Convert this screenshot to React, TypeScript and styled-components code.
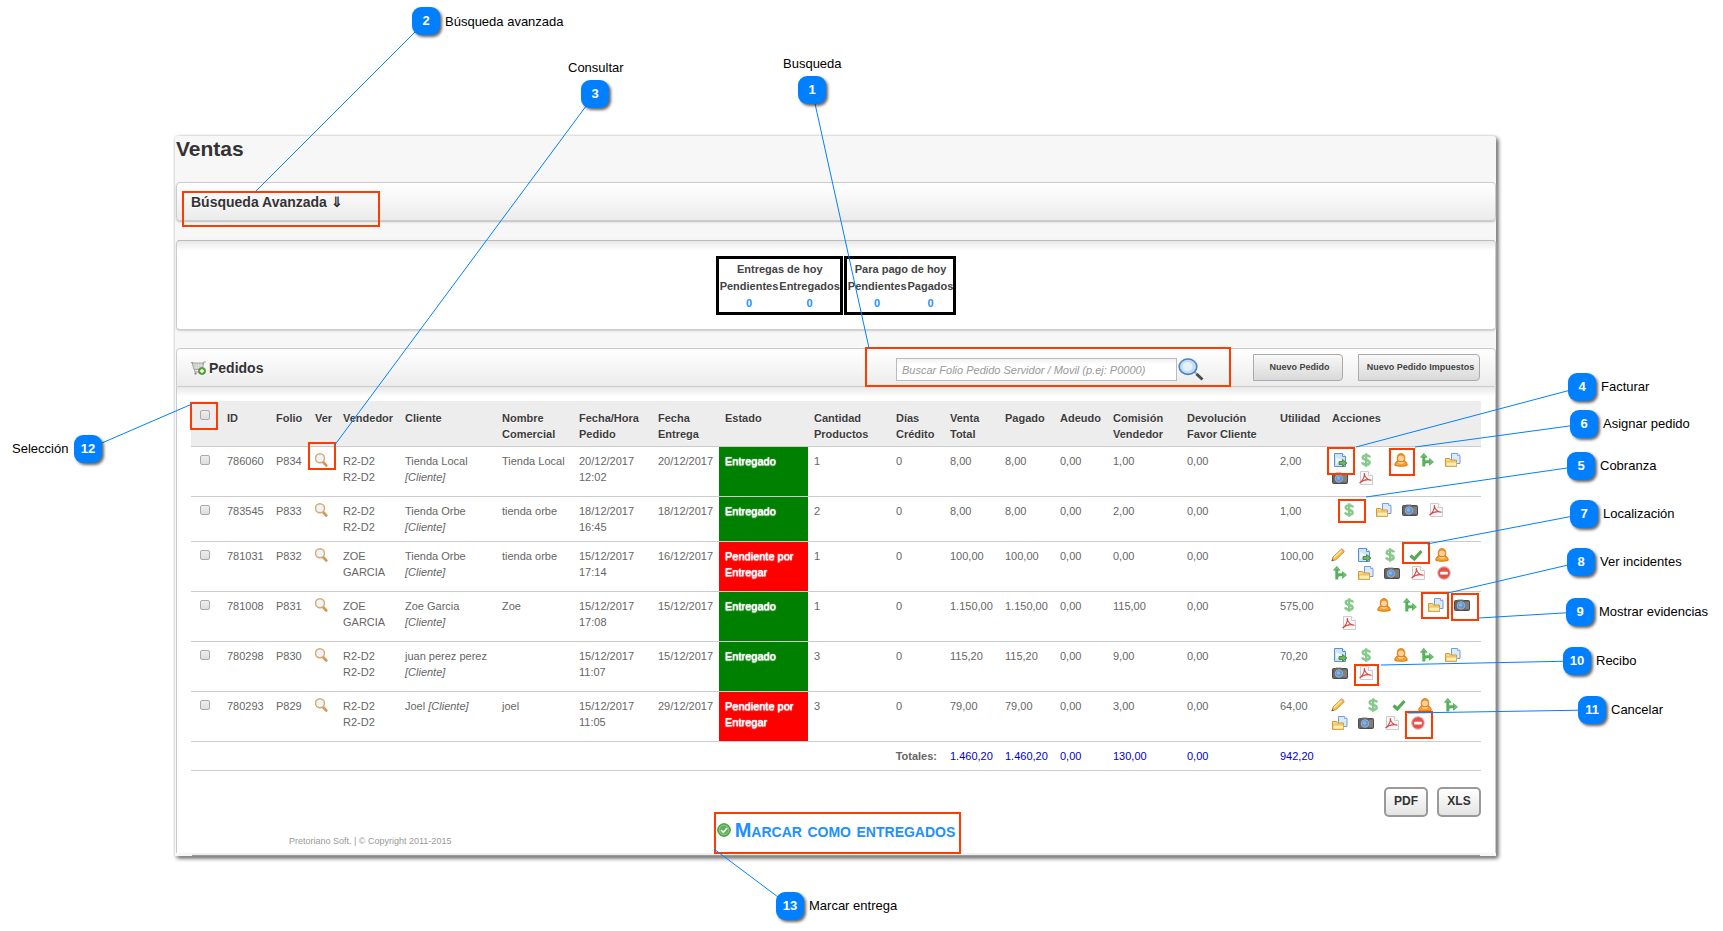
import React from "react";
import styled, { createGlobalStyle } from "styled-components";

const GlobalStyle = createGlobalStyle`
  *, *::before, *::after { box-sizing: border-box; }
  body {
    margin: 0;
    background: #fff;
    font-family: "Liberation Sans", Arial, sans-serif;
    font-size: 11px;
    line-height: 16px;
    color: #666;
  }
`;

const Page = styled.div`
  position: relative;
  padding: 136px 227px 68px 175px;
`;

const Sheet = styled.main`
  padding-left: 1px;
  background: #f7f7f7;
  border-radius: 3px 3px 0 0;
  box-shadow: 0 0 2px #ccc, 2px 2px 4px #444;
`;

const Title = styled.h1`
  margin: 0 0 21px;
  font-size: 21px;
  line-height: 25px;
  color: #333;
`;

const Bar = styled.div`
  display: flex;
  align-items: center;
  height: 39px;
  padding: 0 14px;
  border: 1px solid #ccc;
  border-radius: 4px 4px 0 0;
  background: linear-gradient(#fff, #ececec);
`;

const SearchBar = styled(Bar)`
  margin-bottom: 19px;
  border-radius: 4px;
  box-shadow: 0 1px 2px #bbb;
`;

const BarTitle = styled.h2`
  display: flex;
  align-items: center;
  gap: 3px;
  flex: 1;
  margin: 0;
  font-size: 14px;
  line-height: 18px;
  color: #333;
  text-shadow: 0 1px 0 #fff;
`;

const Summary = styled.section`
  display: flex;
  justify-content: center;
  gap: 1px;
  height: 90px;
  margin-bottom: 18px;
  padding-top: 15px;
  border: 1px solid #ccc;
  border-top-color: #bbb;
  border-radius: 4px;
  background: linear-gradient(#e8e8e8, #fff 10px);
  box-shadow: 0 1px 2px #ccc;
`;

const SummaryTable = styled.table`
  height: 59px;
  padding-top: 2px;
  border: 3px solid #000;
  border-spacing: 0;
  color: #444;
  text-align: center;

  th, td {
    padding: 0 0 0 1px;
    line-height: 17px;
    font-weight: bold;
  }

  td { color: #1e90ff; }
`;

const Content = styled.section`
  padding: 14px 14px 6px;
  border: solid #ccc;
  border-width: 0 1px;
  background: linear-gradient(#e8e8e8, #fff 10px);
`;

const SheetEdge = styled.div`
  height: 3px;
  margin: 0 16px;
  border-bottom: 1px solid #999;
  background: #f0f0f0;
`;

const SearchForm = styled.form`
  display: flex;
  align-items: center;
  gap: 1px;
  margin: 4px 49px 0 0;
`;

const SearchInput = styled.input`
  width: 281px;
  height: 23px;
  padding: 0 5px;
  border: 1px solid #bbb;
  background: linear-gradient(#f2f2f2, #fff 6px);
  font: 11px "Liberation Sans", Arial, sans-serif;

  &::placeholder {
    color: #999;
    font-style: italic;
    opacity: 1;
  }
`;

const IconButton = styled.button`
  display: block;
  padding: 0;
  border: 0;
  background: none;
  cursor: pointer;

  svg { display: block; }
`;

const BarButton = styled.button<{ $width: number }>`
  width: ${(p) => p.$width}px;
  height: 27px;
  margin-right: 1px;
  padding: 0 0 2px 3px;
  border: 1px solid #aaa;
  border-radius: 0 4px 4px 0;
  background: linear-gradient(#f8f8f8, #d9d9d9);
  font: bold 9px "Liberation Sans", Arial, sans-serif;
  white-space: nowrap;
  color: #444;

  & + & { margin-left: 14px; }
`;

const OrdersTable = styled.table`
  width: 100%;
  table-layout: fixed;
  border-spacing: 0;

  th, td {
    padding: 6px 5px 6px 6px;
    border-bottom: 1px solid #ccc;
    text-align: left;
    vertical-align: top;
  }

  th {
    padding: 9px 0 4px 6px;
    background: #ededed;
    color: #3c3c3c;
    text-shadow: 0 1px 0 #fff;
  }

  th:first-child { padding-top: 7px; }
`;

const Check = styled.input`
  appearance: none;
  display: block;
  width: 10px;
  height: 10px;
  margin: 2px 0 0 3px;
  border: 1px solid #aaa;
  border-radius: 2px;
  background: linear-gradient(#eee, #ddd);
`;

const StatusCell = styled.td<{ $done: boolean }>`
  background: ${(p) => (p.$done ? "#008000" : "#ff0000")};
  color: #fff;
  text-shadow: 0 1px 1px #fff, 0 0 1px #fff;
`;

const TotalLabel = styled.td`
  && {
    padding-right: 7px;
    text-align: right;
    font-weight: bold;
  }
`;

const Total = styled.td`
  color: #0000cc;
`;

const Actions = styled.div`
  display: flex;
  flex-direction: column;
  gap: 4px;
  margin-bottom: 5px;
`;

const ActionLine = styled.div`
  display: flex;
  gap: 10px;
  height: 14px;
`;

const ActionSpace = styled.span`
  width: 9px;
  margin-right: -10px;
`;

const Exports = styled.div`
  display: flex;
  justify-content: flex-end;
  gap: 9px;
  margin-top: 16px;
`;

const ExportButton = styled.button`
  min-width: 44px;
  height: 30px;
  padding: 0 8px 2px;
  border: 2px solid #999;
  border-radius: 5px;
  background: linear-gradient(#fff, #e4e4e4);
  font: bold 12px "Liberation Sans", Arial, sans-serif;
  color: #333;
`;

const Footer = styled.footer`
  display: grid;
  grid-template-columns: 1fr auto 1fr;
  height: 30px;
`;

const Copyright = styled.small`
  align-self: end;
  padding-left: 98px;
  font-size: 9px;
  line-height: 12px;
  color: #999;
`;

const MarkLink = styled.a`
  display: flex;
  gap: 4px;
  font-size: 20px;
  font-weight: bold;
  font-variant: small-caps;
  line-height: 27px;
  color: #1e90ff;
  text-decoration: none;

  svg { margin-top: 6px; }
`;

const Overlay = styled.div`
  position: absolute;
  inset: 0;
  pointer-events: none;
`;

const Leaders = styled.svg`
  position: absolute;
  inset: 0;
  width: 100%;
  height: 100%;
  overflow: visible;
  stroke: #0080ff;
`;

const Frame = styled.div<{ $x: number; $y: number; $w: number; $h: number }>`
  position: absolute;
  left: ${(p) => p.$x}px;
  top: ${(p) => p.$y}px;
  width: ${(p) => p.$w}px;
  height: ${(p) => p.$h}px;
  border: 2px solid #ff3b00;
`;

const Badge = styled.span<{ $x: number; $y: number }>`
  position: absolute;
  left: ${(p) => p.$x}px;
  top: ${(p) => p.$y}px;
  width: 28px;
  height: 28px;
  border-radius: 9px;
  background: #0080ff;
  box-shadow: 2px 2px 3px rgba(0, 0, 0, 0.6);
  color: #fff;
  font-size: 13px;
  font-weight: bold;
  line-height: 28px;
  text-align: center;
`;

const Label = styled.span<{ $x: number; $y: number }>`
  position: absolute;
  left: ${(p) => p.$x}px;
  top: ${(p) => p.$y}px;
  padding-left: 1px;
  font-size: 13px;
  line-height: 16px;
  white-space: nowrap;
  color: #000;
`;

type IconName =
  | "invoice" | "dollar" | "user" | "branch" | "folder"
  | "camera" | "pdf" | "pencil" | "tick" | "cancel";

const drawings: Record<IconName, React.ReactNode> = {
  invoice: (
    <>
      <path d="M2.500.5h8l3 3v10h-11z" fill="#cfe3f8" stroke="#5b93d0" />
      <path d="M10.500.5v3h3" fill="#fff" stroke="#5b93d0" />
      <path d="M4 11V4l6 3z" fill="#eef6ff" />
      <path d="M7 8.500h3.500v-2l4.500 3.500-4.500 3.500v-2H7z" fill="#6cb85a" stroke="#3b7f32" strokeWidth=".8" />
    </>
  ),
  dollar: (
    <path
      d="M12 4.300C11.500 2.800 10 2.400 8.200 2.400 6 2.400 4.700 3.300 4.700 4.600c0 3.200 7 1.500 7 4.800 0 1.400-1.500 2.200-3.500 2.200-2.200 0-3.700-.700-4.200-2.300M8.200.2v13.600"
      fill="none" stroke="#86c98b" strokeWidth="2.400"
    />
  ),
  user: (
    <>
      <path d="M1.800 12.300c0-2.600 1.500-4 3.700-4.300h5c2.200.3 3.700 1.700 3.700 4.300-2 1.200-10.400 1.200-12.400 0z" fill="#f9a12c" stroke="#d07208" />
      <path d="M4.300 7.500C3.500 3 5 .5 8 .5s4.500 2.500 3.700 7c-1.500 1.500-5.900 1.500-7.400 0z" fill="#ee8c1c" stroke="#d07208" strokeWidth=".6" />
      <ellipse cx="8" cy="5.300" rx="2.900" ry="2.900" fill="#fcd3a0" />
      <path d="M5.300 9c1.500 1.500 3.900 1.500 5.400 0" fill="none" stroke="#fbd8a5" strokeWidth="1.200" />
    </>
  ),
  branch: (
    <>
      <path d="M4.800 3v10.500M4.800 11.500c0-2 1-2.700 3-2.700h3" fill="none" stroke="#55b25b" strokeWidth="3" />
      <path d="M1.500 4.300L4.800.3l3.300 4zM10.500 5.500l4 3.400-4 3.400z" fill="#6cc071" stroke="#3f9d48" strokeWidth=".6" />
    </>
  ),
  folder: (
    <>
      <path d="M6.500.5h6l2.500 2v8H6.500z" fill="#dbe9fb" stroke="#6f9fdc" />
      <path d="M12.500.5v2H15" fill="#fff" stroke="#6f9fdc" strokeWidth=".8" />
      <path d="M.500 13.500v-8h4l1 1.500h6v6.500z" fill="#fbd777" stroke="#cf9a38" />
      <path d="M1 13.200V9h10.500v4.200z" fill="#fdeeb5" stroke="#d9a646" strokeWidth=".7" />
    </>
  ),
  camera: (
    <>
      <rect x=".5" y="2.500" width="15" height="10" rx="1" fill="#666" stroke="#4c4c4c" />
      <path d="M3 2.500l1-1h5l1 1z" fill="#888" />
      <path d="M12 4v7M14 4v7" stroke="#999" />
      <circle cx="7" cy="7.500" r="3.800" fill="#5e98d8" stroke="#a8adb5" />
      <circle cx="6.500" cy="7" r="1.700" fill="#84b6ee" />
    </>
  ),
  pdf: (
    <>
      <path d="M2.500.5h8l4 4v9h-12z" fill="#f8f8f8" stroke="#ccc" />
      <path d="M10.500.5v4h4" fill="#fff" stroke="#ccc" />
      <path d="M1.500 12C4 10.500 7 6 6.300 2.200 6.500 6 9.500 9 13.500 9.200 9.500 8 5 9 1.500 12z" fill="none" stroke="#dc4446" strokeWidth="1.100" />
    </>
  ),
  pencil: (
    <>
      <path d="M2 12.800l1-3.800 8.500-8 2.800 2.600-8.500 8.200z" fill="#f7c04d" stroke="#c98a24" strokeWidth=".9" />
      <path d="M4 9.500l8-7.300" stroke="#ffe9a0" strokeWidth="1.200" />
      <path d="M10.800 1.600l1-1c1 0 2.600 1.500 2.500 2.600l-1 1z" fill="#e8a080" />
      <path d="M1.500 13.300l.7-2.300 1.600 1.600z" fill="#555" />
    </>
  ),
  tick: <path d="M2.500 7.500l3.800 3.500L13.500 3" fill="none" stroke="#55a957" strokeWidth="3.200" />,
  cancel: (
    <>
      <circle cx="8" cy="7" r="6.200" fill="#e4514b" stroke="#eba19c" />
      <rect x="4.200" y="5.700" width="7.600" height="2.800" rx=".5" fill="#fff" />
    </>
  ),
};

const ActionIcon = ({ name }: { name: IconName }) => {
  const width = name === "pencil" ? 14 : 16;
  return (
    <svg width={width} height="14" viewBox={`${16 - width} 0 ${width} 14`} overflow="visible">
      {drawings[name]}
    </svg>
  );
};

const ViewIcon = () => (
  <svg width="14" height="14" viewBox="1 0 14 14">
    <path d="M9 9l3.300 3.500" stroke="#cf9a5a" strokeWidth="2.600" strokeLinecap="round" />
    <circle cx="6" cy="5.300" r="4.500" fill="#eaf4fd" stroke="#dda766" strokeWidth="1.400" />
  </svg>
);

const SearchIcon = () => (
  <svg width="26" height="23" viewBox="0 0 26 23">
    <path d="M16.500 14l3 2.500" stroke="#aaa" strokeWidth="2" />
    <path d="M18.500 16l6 5.500" stroke="#4a4a4a" strokeWidth="3" />
    <ellipse cx="10" cy="8.700" rx="8.800" ry="7.700" fill="#c6dcf0" stroke="#4785c0" strokeWidth="1.600" />
    <ellipse cx="9.500" cy="8.500" rx="5" ry="4.500" fill="#e6f0f9" />
  </svg>
);

const CartIcon = () => (
  <svg width="15" height="14" viewBox="0 0 15 14">
    <path d="M0 1.500h2l2 9.500h7" fill="none" stroke="#999" />
    <path d="M1 2h11.500l-1 6.500H3z" fill="#c4c4c4" stroke="#999" strokeWidth=".8" />
    <path d="M14.800 1h-2l-1 3" fill="none" stroke="#999" />
    <path d="M2 4h10M2.500 6.200h9M5 2.500V8M7.500 2.500V8M10 2.500V8" stroke="#f0f0f0" strokeWidth=".6" />
    <circle cx="4.500" cy="12.500" r="1.200" fill="#999" />
    <circle cx="11" cy="10" r="3.600" fill="#5aa832" stroke="#3e7f20" strokeWidth=".6" />
    <path d="M11 8v4M9 10h4" stroke="#fff" strokeWidth="1.300" />
  </svg>
);

const DoneIcon = () => (
  <svg width="14" height="14" viewBox="0 0 14 14">
    <circle cx="7" cy="7" r="6.300" fill="#5db254" stroke="#3f8f3a" />
    <circle cx="7" cy="7" r="4.800" fill="none" stroke="#9ad694" strokeWidth=".8" />
    <path d="M4 7l2.300 2.300L10.200 5" fill="none" stroke="#fff" strokeWidth="1.600" />
  </svg>
);

const columns: [string, number][] = [
  ["", 30], ["ID", 49], ["Folio", 39], ["Ver", 28], ["Vendedor", 62], ["Cliente", 97],
  ["Nombre Comercial", 77], ["Fecha/Hora Pedido", 79], ["Fecha\nEntrega", 67], ["Estado", 89],
  ["Cantidad Productos", 82], ["Días Crédito", 54], ["Venta\nTotal", 55], ["Pagado", 55],
  ["Adeudo", 53], ["Comisión Vendedor", 74], ["Devolución Favor Cliente", 93],
  ["Utilidad", 52], ["Acciones", 155],
];

const HeadText = styled.span`
  white-space: pre-line;
`;

type Action = IconName | "space";

interface Order {
  id: string;
  folio: string;
  seller: string;
  client: string;
  business: string;
  ordered: string;
  delivery: string;
  done: boolean;
  quantity: number;
  amounts: string[];
  actions: Action[][];
}

const orders: Order[] = [
  {
    id: "786060", folio: "P834", seller: "R2-D2 R2-D2", client: "Tienda Local", business: "Tienda Local",
    ordered: "20/12/2017 12:02", delivery: "20/12/2017", done: true, quantity: 1,
    amounts: ["8,00", "8,00", "0,00", "1,00", "0,00", "2,00"],
    actions: [["invoice", "dollar", "space", "user", "branch", "folder"], ["camera", "pdf"]],
  },
  {
    id: "783545", folio: "P833", seller: "R2-D2 R2-D2", client: "Tienda Orbe", business: "tienda orbe",
    ordered: "18/12/2017 16:45", delivery: "18/12/2017", done: true, quantity: 2,
    amounts: ["8,00", "8,00", "0,00", "2,00", "0,00", "1,00"],
    actions: [["space", "dollar", "space", "folder", "camera", "pdf"]],
  },
  {
    id: "781031", folio: "P832", seller: "ZOE GARCIA", client: "Tienda Orbe", business: "tienda orbe",
    ordered: "15/12/2017 17:14", delivery: "16/12/2017", done: false, quantity: 1,
    amounts: ["100,00", "100,00", "0,00", "0,00", "0,00", "100,00"],
    actions: [["pencil", "invoice", "dollar", "tick", "user"], ["branch", "folder", "camera", "pdf", "cancel"]],
  },
  {
    id: "781008", folio: "P831", seller: "ZOE GARCIA", client: "Zoe Garcia", business: "Zoe",
    ordered: "15/12/2017 17:08", delivery: "15/12/2017", done: true, quantity: 1,
    amounts: ["1.150,00", "1.150,00", "0,00", "115,00", "0,00", "575,00"],
    actions: [["space", "dollar", "space", "user", "branch", "folder", "camera"], ["space", "pdf"]],
  },
  {
    id: "780298", folio: "P830", seller: "R2-D2 R2-D2", client: "juan perez perez", business: "",
    ordered: "15/12/2017 11:07", delivery: "15/12/2017", done: true, quantity: 3,
    amounts: ["115,20", "115,20", "0,00", "9,00", "0,00", "70,20"],
    actions: [["invoice", "dollar", "space", "user", "branch", "folder"], ["camera", "pdf"]],
  },
  {
    id: "780293", folio: "P829", seller: "R2-D2 R2-D2", client: "Joel", business: "joel",
    ordered: "15/12/2017 11:05", delivery: "29/12/2017", done: false, quantity: 3,
    amounts: ["79,00", "79,00", "0,00", "3,00", "0,00", "64,00"],
    actions: [["pencil", "space", "dollar", "tick", "user", "branch"], ["folder", "camera", "pdf", "cancel"]],
  },
];

const totals = ["1.460,20", "1.460,20", "0,00", "130,00", "0,00", "942,20"];

const actionNames: Record<IconName, string> = {
  invoice: "Facturar", dollar: "Cobranza", user: "Asignar pedido", branch: "Ruta",
  folder: "Ver incidentes", camera: "Mostrar evidencias", pdf: "Recibo",
  pencil: "Editar", tick: "Localización", cancel: "Cancelar",
};

interface Callout {
  n: number;
  text: string;
  badge: [number, number];
  label: [number, number];
  tip: [number, number];
  frame: [number, number, number, number];
}

const callouts: Callout[] = [
  { n: 1, text: "Busqueda", badge: [798, 76], label: [782, 56], tip: [869, 348], frame: [865, 347, 366, 40] },
  { n: 2, text: "Búsqueda avanzada", badge: [412, 7], label: [444, 14], tip: [256, 191], frame: [182, 191, 198, 36] },
  { n: 3, text: "Consultar", badge: [581, 80], label: [567, 60], tip: [334, 446], frame: [308, 442, 28, 28] },
  { n: 4, text: "Facturar", badge: [1568, 373], label: [1600, 379], tip: [1356, 447], frame: [1327, 447, 28, 28] },
  { n: 6, text: "Asignar pedido", badge: [1570, 410], label: [1602, 416], tip: [1415, 447], frame: [1389, 448, 26, 28] },
  { n: 5, text: "Cobranza", badge: [1567, 452], label: [1599, 458], tip: [1366, 497], frame: [1338, 499, 28, 24] },
  { n: 7, text: "Localización", badge: [1570, 500], label: [1602, 506], tip: [1427, 544], frame: [1402, 542, 28, 22] },
  { n: 8, text: "Ver incidentes", badge: [1567, 548], label: [1599, 554], tip: [1448, 593], frame: [1421, 592, 28, 27] },
  { n: 9, text: "Mostrar evidencias", badge: [1566, 598], label: [1598, 604], tip: [1479, 618], frame: [1451, 593, 28, 28] },
  { n: 10, text: "Recibo", badge: [1563, 647], label: [1595, 653], tip: [1381, 665], frame: [1354, 664, 25, 22] },
  { n: 11, text: "Cancelar", badge: [1578, 696], label: [1610, 702], tip: [1408, 713], frame: [1405, 711, 28, 28] },
  { n: 12, text: "Selección", badge: [74, 435], label: [11, 441], tip: [192, 404], frame: [190, 402, 28, 28] },
  { n: 13, text: "Marcar entrega", badge: [776, 892], label: [808, 898], tip: [714, 849], frame: [714, 812, 247, 42] },
];

const DaySummary = ({ title, heads }: { title: string; heads: string[] }) => (
  <SummaryTable>
    <thead>
      <tr><th colSpan={2}>{title}</th></tr>
      <tr>{heads.map((h) => <th key={h}>{h}</th>)}</tr>
    </thead>
    <tbody>
      <tr>{heads.map((h) => <td key={h}>0</td>)}</tr>
    </tbody>
  </SummaryTable>
);

const OrderRow = ({ order }: { order: Order }) => (
  <tr>
    <td><Check type="checkbox" aria-label={`Seleccionar ${order.folio}`} /></td>
    <td>{order.id}</td>
    <td>{order.folio}</td>
    <td><IconButton type="button" aria-label="Consultar"><ViewIcon /></IconButton></td>
    <td>{order.seller}</td>
    <td>{order.client} <i>[Cliente]</i></td>
    <td>{order.business}</td>
    <td>{order.ordered}</td>
    <td>{order.delivery}</td>
    <StatusCell $done={order.done}>{order.done ? "Entregado" : "Pendiente por Entregar"}</StatusCell>
    <td>{order.quantity}</td>
    <td>0</td>
    {order.amounts.map((a, i) => <td key={i}>{a}</td>)}
    <td>
      <Actions>
        {order.actions.map((line, i) => (
          <ActionLine key={i}>
            {line.map((a, j) =>
              a === "space" ? <ActionSpace key={j} /> : (
                <IconButton key={j} type="button" aria-label={actionNames[a]}>
                  <ActionIcon name={a} />
                </IconButton>
              )
            )}
          </ActionLine>
        ))}
      </Actions>
    </td>
  </tr>
);

export default function App() {
  return (
    <Page>
      <GlobalStyle />
      <Sheet>
        <Title>Ventas</Title>
        <SearchBar><BarTitle>Búsqueda Avanzada ⇓</BarTitle></SearchBar>
        <Summary>
          <DaySummary title="Entregas de hoy" heads={["Pendientes", "Entregados"]} />
          <DaySummary title="Para pago de hoy" heads={["Pendientes", "Pagados"]} />
        </Summary>
        <Bar>
          <BarTitle><CartIcon />Pedidos</BarTitle>
          <SearchForm onSubmit={(e) => e.preventDefault()}>
            <SearchInput aria-label="Buscar pedido" placeholder="Buscar Folio Pedido Servidor / Movil (p.ej: P0000)" />
            <IconButton aria-label="Buscar"><SearchIcon /></IconButton>
          </SearchForm>
          <BarButton type="button" $width={90}>Nuevo Pedido</BarButton>
          <BarButton type="button" $width={122}>Nuevo Pedido Impuestos</BarButton>
        </Bar>
        <Content>
          <OrdersTable>
            <colgroup>
              {columns.map(([name, width]) => <col key={name} style={{ width }} />)}
            </colgroup>
            <thead>
              <tr>
                {columns.map(([name]) => (
                  <th key={name} scope="col">
                    {name ? <HeadText>{name}</HeadText> : <Check type="checkbox" aria-label="Seleccionar todos" />}
                  </th>
                ))}
              </tr>
            </thead>
            <tbody>
              {orders.map((o) => <OrderRow key={o.id} order={o} />)}
            </tbody>
            <tfoot>
              <tr>
                <TotalLabel colSpan={12}>Totales:</TotalLabel>
                {totals.map((t, i) => <Total key={i}>{t}</Total>)}
                <td />
              </tr>
            </tfoot>
          </OrdersTable>
          <Exports>
            <ExportButton type="button">PDF</ExportButton>
            <ExportButton type="button">XLS</ExportButton>
          </Exports>
          <Footer>
            <Copyright>Pretoriano Soft. | © Copyright 2011-2015</Copyright>
            <MarkLink href="#entregados"><DoneIcon />Marcar como entregados</MarkLink>
          </Footer>
        </Content>
        <SheetEdge />
      </Sheet>
      <Overlay>
        {callouts.map((c) => (
          <Frame key={c.n} $x={c.frame[0]} $y={c.frame[1]} $w={c.frame[2]} $h={c.frame[3]} />
        ))}
        <Leaders>
          {callouts.map((c) => (
            <line key={c.n} x1={c.badge[0] + 14} y1={c.badge[1] + 14} x2={c.tip[0]} y2={c.tip[1]} />
          ))}
        </Leaders>
        {callouts.map((c) => (
          <React.Fragment key={c.n}>
            <Badge $x={c.badge[0]} $y={c.badge[1]}>{c.n}</Badge>
            <Label $x={c.label[0]} $y={c.label[1]}>{c.text}</Label>
          </React.Fragment>
        ))}
      </Overlay>
    </Page>
  );
}
